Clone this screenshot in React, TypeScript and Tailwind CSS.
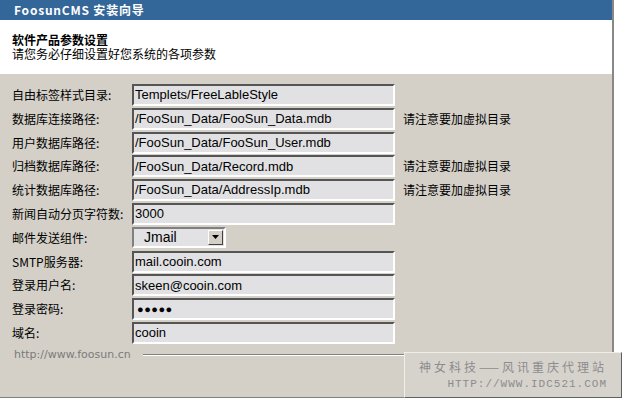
const ROWS = [
  { label: "自由标签样式目录:", value: "Templets/FreeLableStyle", note: "" },
  { label: "数据库连接路径:", value: "/FooSun_Data/FooSun_Data.mdb", note: "请注意要加虚拟目录" },
  { label: "用户数据库路径:", value: "/FooSun_Data/FooSun_User.mdb", note: "" },
  { label: "归档数据库路径:", value: "/FooSun_Data/Record.mdb", note: "请注意要加虚拟目录" },
  { label: "统计数据库路径:", value: "/FooSun_Data/AddressIp.mdb", note: "请注意要加虚拟目录" },
  { label: "新闻自动分页字符数:", value: "3000", note: "" },
  { label: "邮件发送组件:", value: "Jmail", note: "", select: true },
  { label: "SMTP服务器:", value: "mail.cooin.com", note: "" },
  { label: "登录用户名:", value: "skeen@cooin.com", note: "" },
  { label: "登录密码:", value: "●●●●●", note: "", password: true },
  { label: "域名:", value: "cooin", note: "" },
];

const cjk = "font-['SimSun','Noto_Sans_CJK_SC',sans-serif]";
const input = "font-['Liberation_Sans','Noto_Sans_CJK_SC',sans-serif]";
const latin = "font-['Tahoma','DejaVu_Sans','Noto_Sans_CJK_SC',sans-serif]";

const Field = ({ row }: { row: (typeof ROWS)[number] }) => {
  if (row.select) {
    return (
      <div className="flex h-[21px] w-[94px] items-center border-2 border-t-[#808080] border-l-[#808080] border-r-white border-b-white bg-[#e2e1e4]">
        <span className={`flex-1 pl-[10px] text-[14px] text-black ${input}`}>{row.value}</span>
        <span className="mr-[1px] flex h-[15px] w-[15px] items-center justify-center border border-t-white border-l-white border-r-[#404040] border-b-[#404040] bg-[#d4d0c8]">
          <svg width="7" height="4" viewBox="0 0 7 4">
            <path d="M0 0h7L3.5 4z" fill="#000" />
          </svg>
        </span>
      </div>
    );
  }
  return (
    <div
      className={`flex h-[22px] w-[263px] items-center border-2 border-t-[#555] border-l-[#555] border-r-white border-b-white bg-[#e1e1e3] pl-[1px] text-black ${input} ${
        row.password ? "pl-[3px] text-[11px] tracking-[0.5px]" : "text-[13px]"
      }`}
    >
      {row.value}
    </div>
  );
};

export default function App() {
  return (
    <div className="relative h-[398px] w-[623px] overflow-hidden bg-white">
      <div className="flex h-[398px] w-[614px] flex-col border-r-2 border-[#888]">
        <div className={`flex h-[20px] items-center bg-[#336699] pl-[14px] text-[12px] font-bold tracking-[0.8px] text-white ${cjk}`}>
          FoosunCMS 安装向导
        </div>
        <div className={`flex h-[54px] flex-col justify-center bg-white pl-[12px] text-[12px] leading-[14px] text-black ${cjk}`}>
          <div className="font-bold">软件产品参数设置</div>
          <div>请您务必仔细设置好您系统的各项参数</div>
        </div>
        <div className="flex flex-1 flex-col border-b border-[#808080] bg-[#d4d0c8] pt-[10px]">
          {ROWS.map((row) => (
            <div key={row.label} className="flex h-[23.8px] items-start">
              <div className={`flex h-[22px] w-[132px] items-center pl-[12px] text-[12px] text-black ${cjk}`}>
                {row.label}
              </div>
              <Field row={row} />
              {row.note && (
                <div className={`flex h-[22px] items-center pl-[8px] text-[12px] text-black ${cjk}`}>{row.note}</div>
              )}
            </div>
          ))}
          <div className="mt-[1px] flex items-center pl-[14px]">
            <span className={`text-[11px] text-[#7a7a7a] ${latin}`}>http://www.foosun.cn</span>
            <div className="ml-[12px] h-[2px] flex-1 border-t border-[#808080] border-b border-b-white" />
          </div>
        </div>
      </div>
      <div className="absolute bottom-0 left-[404px] flex h-[46px] w-[218px] flex-col items-end justify-center border border-t-[#f0eee8] border-l-[#f0eee8] border-r-[#606060] border-b-[#606060] bg-[#d6d3cc] pr-[14px]">
        <div className={`text-[12px] tracking-[3px] text-[#8c8c8c] ${cjk}`}>神女科技——风讯重庆代理站</div>
        <div className="font-['Liberation_Mono',monospace] text-[11px] tracking-[1px] text-[#8c8c8c]">HTTP://WWW.IDC521.COM</div>
      </div>
    </div>
  );
}
